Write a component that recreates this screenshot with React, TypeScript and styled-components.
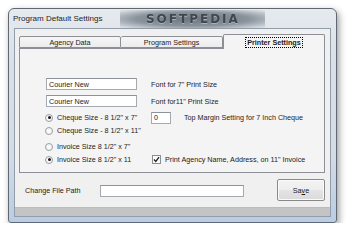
import React from "react";
import styled, { createGlobalStyle } from "styled-components";

const Global = createGlobalStyle`
  html, body { margin: 0; padding: 0; background: #ffffff; }
  body { font-family: "Liberation Sans", Arial, sans-serif; color: #1c1c1c; }
`;

const Window = styled.div`
  margin: 8px 0 0 8px;
  width: 329px;
  height: 215px;
  box-sizing: border-box;
  border: 1px solid #5f6873;
  border-radius: 6px 6px 3px 3px;
  background: linear-gradient(180deg, #e6eaef 0%, #dae0e7 25%, #d3dbe4 70%, #b9cde4 100%);
  box-shadow: 2px 3px 7px rgba(0, 0, 0, 0.4);
  display: flex;
  flex-direction: column;
  padding: 0 5px 5px 5px;
`;

const TitleBar = styled.div`
  height: 19px;
  display: flex;
  align-items: center;
  font-size: 8px;
  color: #1e1e1e;
`;

const TitleText = styled.span`
  margin-left: -1px;
`;

const Watermark = styled.span`
  margin-left: 18px;
  width: 145px;
  height: 18px;
  display: flex;
  align-items: center;
  justify-content: center;
  font-family: "DejaVu Sans", sans-serif;
  font-weight: bold;
  font-size: 12px;
  letter-spacing: 2px;
  color: #3f464e;
  text-shadow: 0 1px 0 #a9b0b8;
  background: radial-gradient(ellipse at center, #6d757e 0%, #8a929b 55%, rgba(200, 207, 215, 0) 100%);
  filter: blur(0.7px);
`;

const Client = styled.div`
  flex: 1;
  background: #f0f0f0;
  border: 1px solid #929daa;
  display: flex;
  flex-direction: column;
  font-size: 7.2px;
`;

const Tabs = styled.div`
  margin: 5px 0 0 4px;
  width: 306px;
  display: flex;
  flex-direction: column;
`;

const TabStrip = styled.div`
  display: flex;
  align-items: flex-end;
  height: 14px;
  position: relative;
  z-index: 1;
`;

const Tab = styled.div<{ $active?: boolean }>`
  box-sizing: border-box;
  width: 102px;
  height: ${(p) => (p.$active ? "15px" : "12px")};
  margin-bottom: ${(p) => (p.$active ? "-1px" : "0")};
  border: 1px solid #8c8f96;
  border-bottom: ${(p) => (p.$active ? "none" : "1px solid #8c8f96")};
  border-left-width: ${(p) => (p.$active ? "1px" : "0")};
  border-radius: 2px 2px 0 0;
  background: ${(p) => (p.$active ? "#f4f4f4" : "linear-gradient(#f6f6f6, #ececec)")};
  display: flex;
  align-items: center;
  justify-content: center;
  font-weight: ${(p) => (p.$active ? "bold" : "normal")};
  &:first-child { border-left-width: 1px; }
`;

const Focus = styled.span`
  outline: 1px dotted #000;
  outline-offset: 0px;
  padding: 0 1px;
  line-height: 9px;
`;

const Panel = styled.div`
  box-sizing: border-box;
  height: 125px;
  border: 1px solid #8c8f96;
  background: #f4f4f4;
  padding: 29px 0 0 26px;
  display: flex;
  flex-direction: column;
`;

const Row = styled.div<{ $h: number; $mt?: number }>`
  display: flex;
  align-items: center;
  height: ${(p) => p.$h}px;
  margin-top: ${(p) => p.$mt ?? 0}px;
`;

const LeftCell = styled.div`
  width: 105px;
  display: flex;
  align-items: center;
`;

const TextBox = styled.div<{ $w: number }>`
  box-sizing: border-box;
  width: ${(p) => p.$w}px;
  height: 12px;
  border: 1px solid #a5a9b0;
  border-top-color: #8e939a;
  background: #fff;
  padding-left: 2px;
  display: flex;
  align-items: center;
`;

const Label = styled.span<{ $ml?: number }>`
  margin-left: ${(p) => p.$ml ?? 0}px;
  white-space: nowrap;
`;

const Radio = styled.span<{ $on?: boolean }>`
  box-sizing: border-box;
  width: 8px;
  height: 8px;
  border-radius: 50%;
  border: 1px solid #9a9ea5;
  background: radial-gradient(circle, #fff 0%, #eceef1 100%);
  margin-left: -1px;
  margin-right: 4px;
  display: flex;
  align-items: center;
  justify-content: center;
  &::after {
    content: "";
    width: 3px;
    height: 3px;
    border-radius: 50%;
    background: ${(p) => (p.$on ? "#1a1a1a" : "transparent")};
  }
`;

const Check = styled.span`
  box-sizing: border-box;
  width: 9px;
  height: 9px;
  border: 1px solid #8a8f97;
  background: #fbfbfb;
  margin-left: 1px;
  margin-right: 4px;
  display: flex;
  align-items: center;
  justify-content: center;
`;

const Bottom = styled.div`
  display: flex;
  align-items: center;
  margin-top: 6px;
  height: 22px;
  padding-left: 10px;
`;

const PathLabel = styled.span`
  width: 75px;
`;

const PathInput = styled.div`
  box-sizing: border-box;
  width: 144px;
  height: 12px;
  margin-top: 2px;
  border: 1px solid #a5a9b0;
  border-top-color: #8e939a;
  background: #fff;
`;

const Button = styled.div`
  box-sizing: border-box;
  margin-left: 33px;
  width: 48px;
  height: 22px;
  border: 1px solid #8a8a8a;
  border-radius: 2px;
  background: linear-gradient(#f3f3f3 0%, #eeeeee 50%, #e4e4e4 51%, #dadada 100%);
  box-shadow: inset 0 0 0 1px #fbfbfb;
  display: flex;
  align-items: center;
  justify-content: center;
`;

const StatusBar = styled.div`
  margin-top: 6px;
  height: 9px;
  background: #c4c4c4;
  border-top: 1px solid #bbbbbb;
  box-sizing: border-box;
`;

export default function App() {
  return (
    <>
      <Global />
      <Window>
        <TitleBar>
          <TitleText>Program Default Settings</TitleText>
          <Watermark>SOFTPEDIA</Watermark>
        </TitleBar>
        <Client>
          <Tabs>
            <TabStrip>
              <Tab>Agency Data</Tab>
              <Tab>Program Settings</Tab>
              <Tab $active>
                <Focus>Printer Settings</Focus>
              </Tab>
            </TabStrip>
            <Panel>
              <Row $h={12}>
                <LeftCell>
                  <TextBox $w={91}>Courier New</TextBox>
                </LeftCell>
                <Label>Font for 7" Print Size</Label>
              </Row>
              <Row $h={12} $mt={5}>
                <LeftCell>
                  <TextBox $w={91}>Courier New</TextBox>
                </LeftCell>
                <Label>Font for11" Print Size</Label>
              </Row>
              <Row $h={13} $mt={4}>
                <LeftCell>
                  <Radio $on />
                  <Label>Cheque Size - 8 1/2" x 7"</Label>
                </LeftCell>
                <TextBox $w={20}>0</TextBox>
                <Label $ml={13}>Top Margin Setting for 7 Inch Cheque</Label>
              </Row>
              <Row $h={13}>
                <LeftCell>
                  <Radio />
                  <Label>Cheque Size - 8 1/2" x 11"</Label>
                </LeftCell>
              </Row>
              <Row $h={13} $mt={3}>
                <LeftCell>
                  <Radio />
                  <Label>Invoice Size 8 1/2" x 7"</Label>
                </LeftCell>
              </Row>
              <Row $h={13}>
                <LeftCell>
                  <Radio $on />
                  <Label>Invoice Size 8 1/2" x 11</Label>
                </LeftCell>
                <Check>
                  <svg width="7" height="7" viewBox="0 0 7 7">
                    <path d="M1 3.5 L2.8 5.4 L6 1.2" fill="none" stroke="#222" strokeWidth="1.3" />
                  </svg>
                </Check>
                <Label>Print Agency Name, Address, on 11" Invoice</Label>
              </Row>
            </Panel>
          </Tabs>
          <Bottom>
            <PathLabel>Change File Path</PathLabel>
            <PathInput />
            <Button>
              <span>
                Sa<u>v</u>e
              </span>
            </Button>
          </Bottom>
          <StatusBar />
        </Client>
      </Window>
    </>
  );
}
